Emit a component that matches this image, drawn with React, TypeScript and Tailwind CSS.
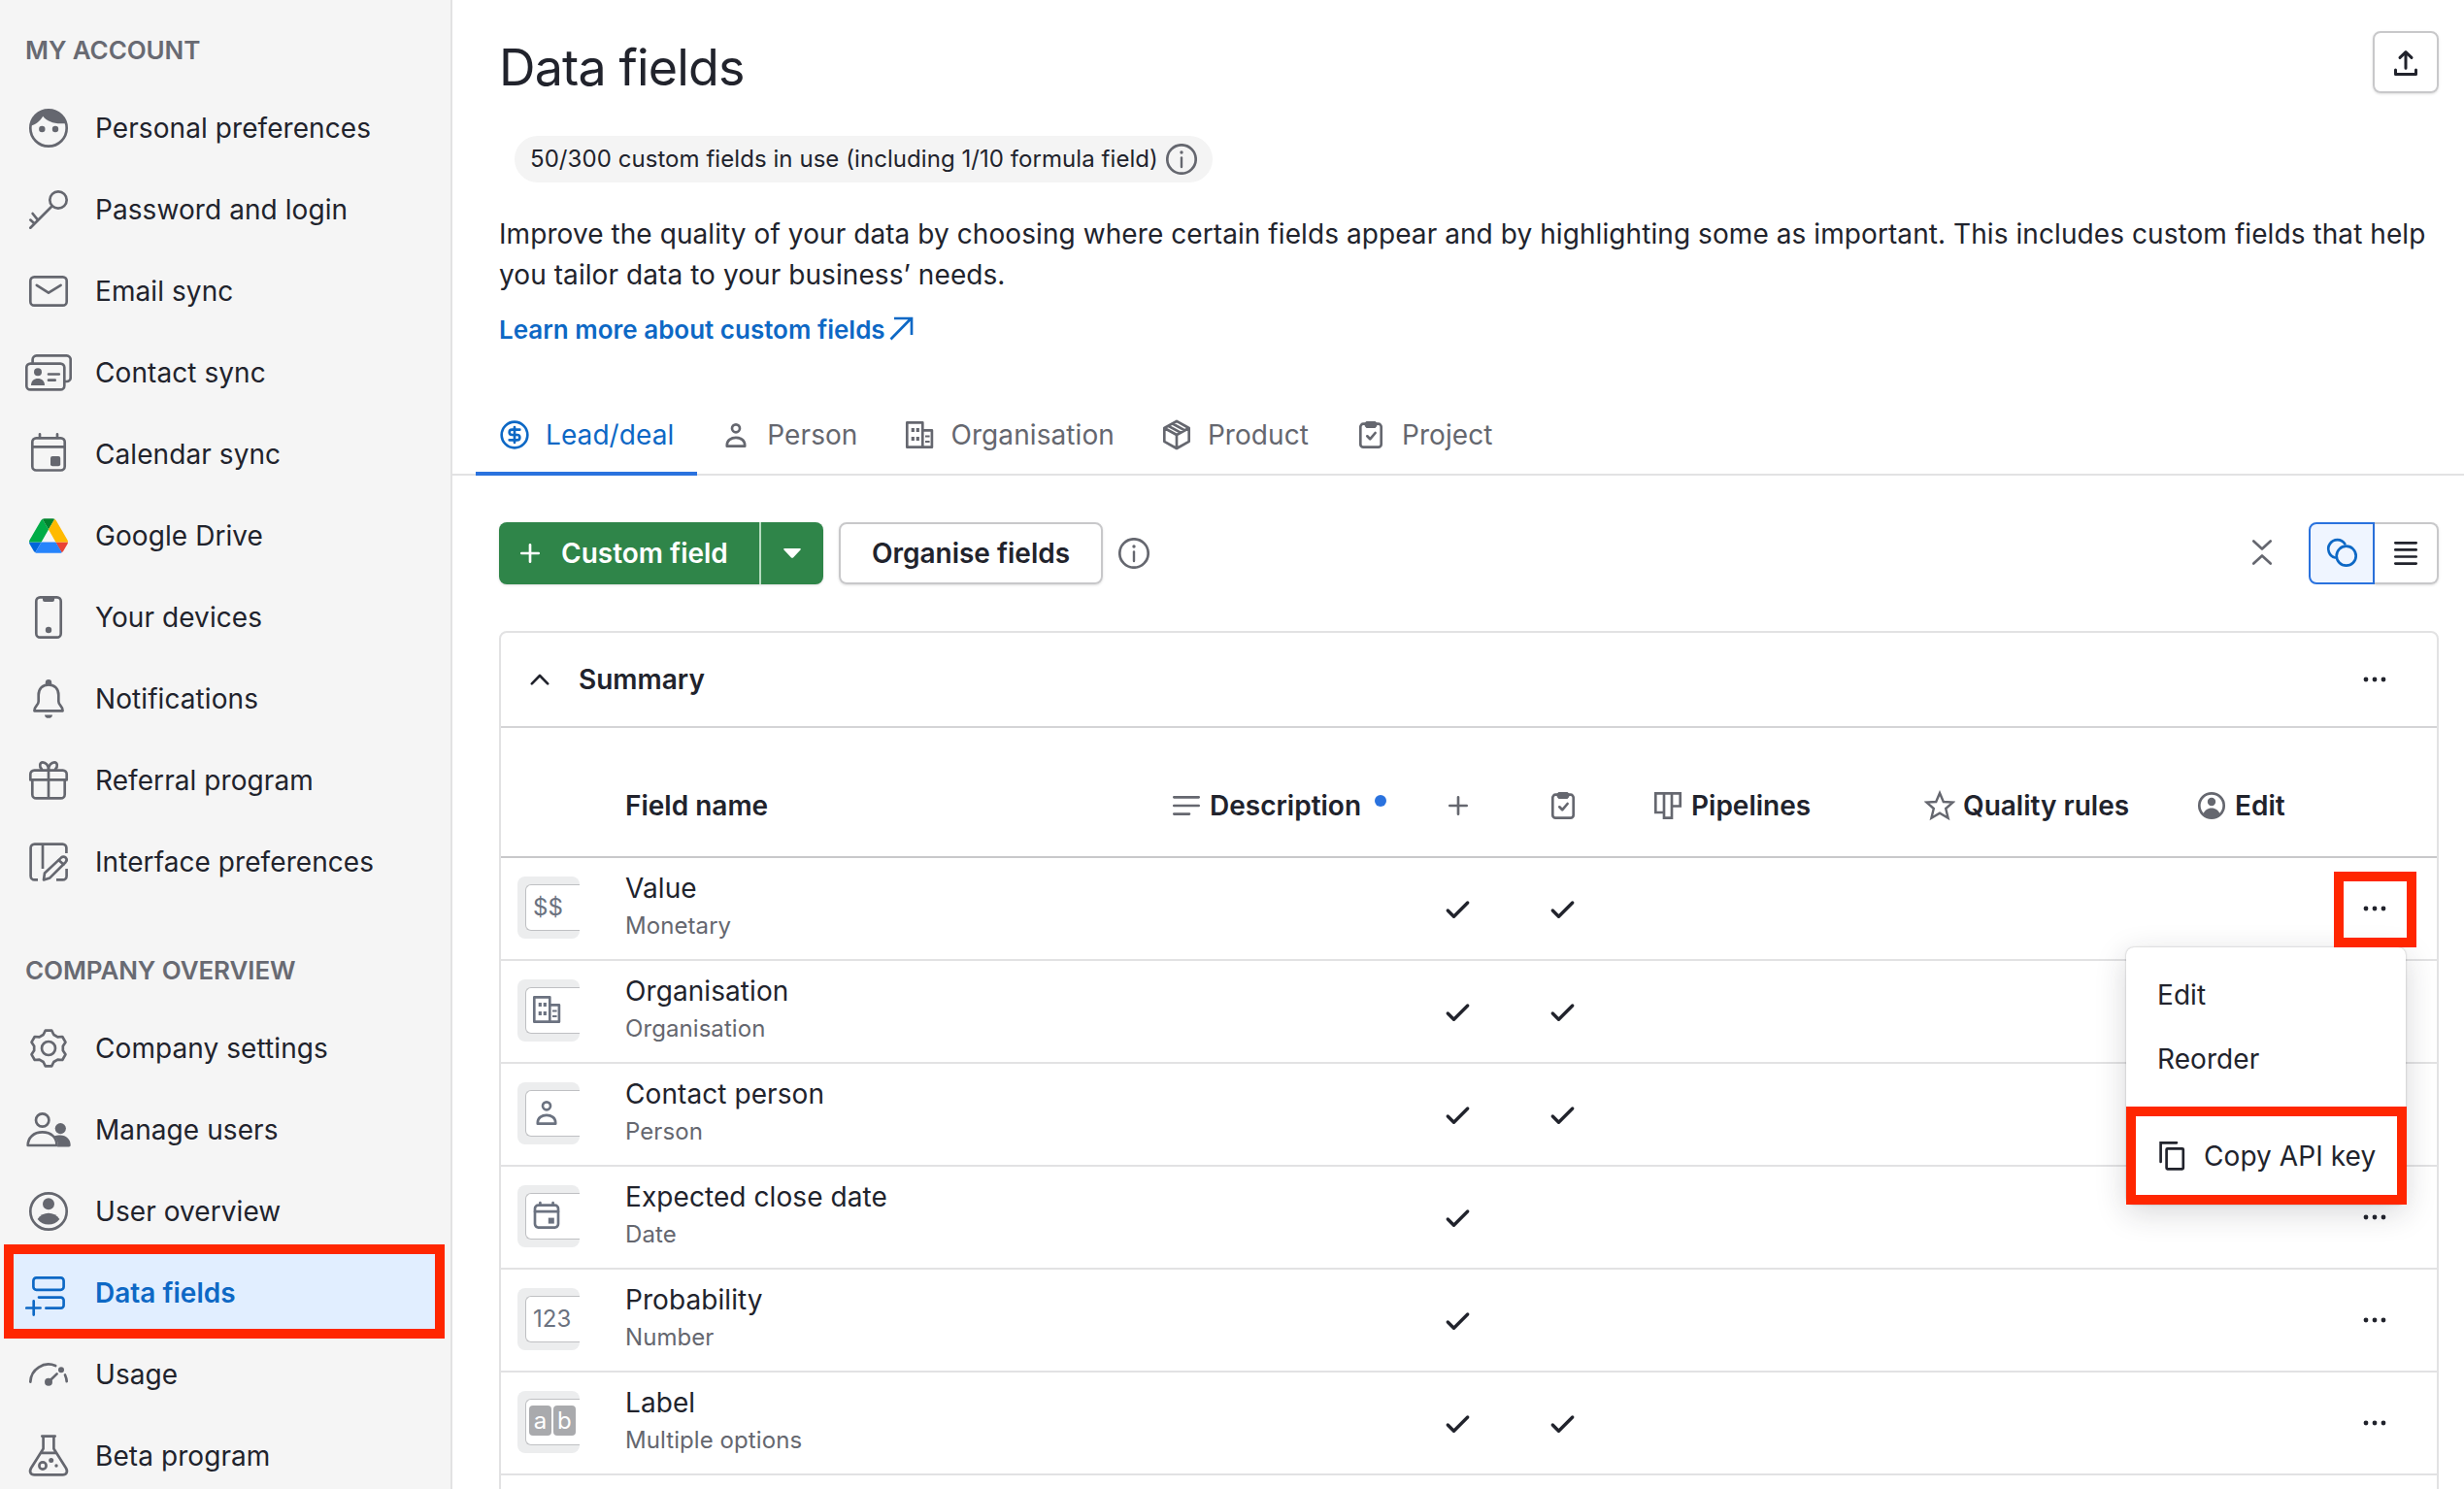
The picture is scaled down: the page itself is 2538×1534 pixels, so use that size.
import type { ReactNode, SVGProps } from 'react'
import { CircleDollarSign } from 'lucide-react'

type IconProps = SVGProps<SVGSVGElement> & { box?: number }

function Icon({ box = 48, className = '', children, ...rest }: IconProps) {
  return (
    <svg
      viewBox={`0 0 ${box} ${box}`}
      width={box}
      height={box}
      fill="none"
      stroke="currentColor"
      strokeWidth={2.67}
      strokeLinecap="round"
      strokeLinejoin="round"
      className={`shrink-0 ${className}`}
      aria-hidden="true"
      {...rest}
    >
      {children}
    </svg>
  )
}

const solid = { fill: 'currentColor', stroke: 'none' }

/* Sidebar icons */

const FaceIcon = () => (
  <Icon>
    <circle cx="24" cy="24" r="18.7" />
    <path d="M4.8 22C10.5 20.5 15.5 17 18.2 11.8C23 18 32 20.5 43 18.8A19.8 19.8 0 0 0 4.8 22Z" {...solid} />
    <circle cx="17.3" cy="25" r="3.2" {...solid} />
    <circle cx="31" cy="25" r="3.2" {...solid} />
  </Icon>
)

const KeyIcon = () => (
  <Icon>
    <circle cx="34" cy="14" r="8.7" />
    <path d="M27.7 20.3L5.3 42.7M13 34.6L7.6 28M9.4 38.2L5.3 34.6" />
  </Icon>
)

const MailIcon = () => (
  <Icon>
    <rect x="5.3" y="9.3" width="37.4" height="29.4" rx="4" />
    <path d="M11.8 17.8L24 25.6L36.6 17.8" />
  </Icon>
)

const ContactIcon = () => (
  <Icon>
    <rect x="1.3" y="14.6" width="39" height="26.8" rx="4" />
    <path d="M7.6 13.5V10.4A4 4 0 0 1 11.6 6.4H42.7A4 4 0 0 1 46.7 10.4V29A4 4 0 0 1 42.7 33H41.5" />
    <circle cx="13" cy="23.3" r="4" {...solid} />
    <path d="M6 37C6 32.5 9 30 13 30S20 32.5 20 37Z" {...solid} />
    <path d="M24 25.5H34.8M24 31.7H30.7" />
  </Icon>
)

const CalendarIcon = () => (
  <Icon>
    <rect x="7.3" y="7.3" width="33.4" height="33.2" rx="4" />
    <path d="M7.3 16.4H40.7M15 3.3V7M33 3.3V7" />
    <rect x="26" y="26" width="10.2" height="10.2" rx="2" {...solid} />
  </Icon>
)

const DriveIcon = () => (
  <svg viewBox="0 0 87.3 78" className="mx-1 h-9 w-10 shrink-0" aria-hidden="true">
    <path d="m6.6 66.85 3.85 6.65c.8 1.4 1.95 2.5 3.3 3.3l13.75-23.8h-27.5c0 1.55.4 3.1 1.2 4.5z" fill="#0066da" />
    <path d="m43.65 25-13.75-23.8c-1.35.8-2.5 1.9-3.3 3.3l-25.4 44a9.06 9.06 0 0 0-1.2 4.5h27.5z" fill="#00ac47" />
    <path d="m73.55 76.8c1.35-.8 2.5-1.9 3.3-3.3l1.6-2.75 7.65-13.25c.8-1.4 1.2-2.95 1.2-4.5h-27.5l5.85 11.5z" fill="#ea4335" />
    <path d="m43.65 25 13.75-23.8c-1.35-.8-2.9-1.2-4.5-1.2h-18.5c-1.6 0-3.15.45-4.5 1.2z" fill="#00832d" />
    <path d="m59.8 53h-32.3l-13.75 23.8c1.35.8 2.9 1.2 4.5 1.2h50.8c1.6 0 3.15-.45 4.5-1.2z" fill="#2684fc" />
    <path d="m73.4 26.5-12.7-22c-.8-1.4-1.95-2.5-3.3-3.3l-13.75 23.8 16.15 28h27.45c0-1.55-.4-3.1-1.2-4.5z" fill="#ffba00" />
  </svg>
)

const PhoneIcon = () => (
  <Icon>
    <rect x="11.3" y="3.3" width="25.4" height="41.4" rx="4" />
    <path d="M18 3.5H30V6A2 2 0 0 1 28 8H20A2 2 0 0 1 18 6Z" {...solid} />
    <circle cx="24" cy="37" r="3.2" {...solid} />
  </Icon>
)

const BellIcon = () => (
  <Icon>
    <path d="M24 9.3C17.5 9.3 13.7 14 13.7 20V26.5C13.7 31 9.4 31 9.4 36.3H38.6C38.6 31 34.3 31 34.3 26.5V20C34.3 14 30.5 9.3 24 9.3Z" />
    <circle cx="24" cy="7.2" r="3.2" {...solid} />
    <path d="M20 40.4H28C28 42.5 26.3 43.8 24 43.8S20 42.5 20 40.4Z" {...solid} />
  </Icon>
)

const GiftIcon = () => (
  <Icon>
    <path d="M5.3 23.4V17.6A4 4 0 0 1 9.3 13.6H38.7A4 4 0 0 1 42.7 17.6V23.4ZM7.3 23.4V38.4A4 4 0 0 0 11.3 42.4H36.7A4 4 0 0 0 40.7 38.4V23.4M24 12V42.4" />
    <path d="M24 12.5C24 8.5 21 5.4 18 5.4S14 9.6 17 12.5M24 12.5C24 8.5 27 5.4 30 5.4S34 9.6 31 12.5" />
  </Icon>
)

const InterfaceIcon = () => (
  <Icon>
    <path d="M13 42.4H9.6A4 4 0 0 1 5.6 38.4V9.6A4 4 0 0 1 9.6 5.6H38.4A4 4 0 0 1 42.4 9.6V15M42.6 31V38.4A4 4 0 0 1 38.6 42.4H32M18 5.6V31" strokeLinecap="butt" />
    <path d="M19 42.4L20 35.5L37 19.6C38.6 18.2 40.4 18.4 41.7 19.6C43 21 42.9 22.8 41.6 24.2L25.4 40.4Z" />
    <path d="M34.6 22.2L39.4 26.6" />
  </Icon>
)

function gearPath() {
  const pts: string[] = []
  for (let i = 0; i < 6; i++) {
    for (const [offset, r] of [[-21, 15], [-10, 18.6], [10, 18.6], [21, 15]]) {
      const a = ((i * 60 + offset - 90) * Math.PI) / 180
      pts.push(`${(24 + r * Math.cos(a)).toFixed(2)} ${(24 + r * Math.sin(a)).toFixed(2)}`)
    }
  }
  return `M${pts.join('L')}Z`
}

const GearIcon = () => (
  <Icon>
    <path d={gearPath()} />
    <circle cx="24" cy="24" r="7" />
  </Icon>
)

const UsersIcon = () => (
  <Icon>
    <circle cx="17.7" cy="14" r="6.7" />
    <path d="M2.7 40C2.7 32 8.7 26.3 17.7 26.3S32.5 32 32.5 40Z" />
    <circle cx="36.3" cy="22.6" r="5.6" {...solid} />
    <path d="M29.5 30.6C31.5 29.8 34 29.5 36 29.5C42.5 29.5 46.7 34 46.7 39.5C46.7 41 46 41.4 45 41.4H33C34.5 37.5 32.5 33 29.5 30.6Z" {...solid} />
  </Icon>
)

const UserCircleIcon = () => (
  <Icon>
    <circle cx="24" cy="24" r="18.7" />
    <circle cx="24" cy="16.2" r="6" {...solid} />
    <path d="M12.6 32C15.5 28 19.5 25.8 24 25.8S32.5 28 35.4 32C32.5 35.6 28.5 37.6 24 37.6S15.5 35.6 12.6 32Z" {...solid} />
  </Icon>
)

const DataFieldsIcon = () => (
  <Icon>
    <rect x="8.4" y="8.4" width="31.2" height="12.4" rx="3" />
    <path d="M14 28.6H36.6A3 3 0 0 1 39.6 31.6V36.7A3 3 0 0 1 36.6 39.7H21.4M1.3 39.5H15.6M8.7 32.4V46.6" />
  </Icon>
)

const UsageIcon = () => (
  <Icon>
    <path d="M5.3 31.6A18.7 18.7 0 0 1 31.2 15M41 24.5A18.7 18.7 0 0 1 42.7 31.2M24 31.7L32.6 23.4" />
    <circle cx="24" cy="31.7" r="4" {...solid} />
    <circle cx="37" cy="19.2" r="3" {...solid} />
  </Icon>
)

const FlaskIcon = () => (
  <Icon>
    <path d="M17.3 3.6H30.7M18.6 3.6V16.5L6 36.5C3.8 40.4 5.6 43.4 9.5 43.4H38.5C42.4 43.4 44.2 40.4 42 36.5L29.4 16.5V3.6M16 20.8H32" />
    <circle cx="18" cy="34" r="3.6" />
    <circle cx="26.7" cy="28.4" r="2.5" {...solid} />
    <circle cx="32" cy="34" r="1.7" {...solid} />
  </Icon>
)

/* Small icons */

const PersonIcon = () => (
  <Icon box={32}>
    <circle cx="16" cy="9.3" r="4" />
    <path d="M6.8 27.7V26.4C6.8 21.8 11 18.8 16 18.8S25.2 21.8 25.2 26.4V27.7Z" />
  </Icon>
)

const BuildingIcon = () => (
  <Icon box={32}>
    <path d="M3.3 3.3H19.3V28.7H3.3ZM19.3 11.3H28.9V28.7H19.3Z" />
    <path d="M9.3 9V13M14.3 9V13M9.3 18V22M14.3 18V22" strokeWidth={3.2} strokeLinecap="butt" />
    <path d="M22 17.6H26.6M22 23H26.6" strokeWidth={2} strokeLinecap="butt" />
  </Icon>
)

const ProductIcon = () => (
  <Icon box={32}>
    <path d="M16 1.8L28.7 9V22.8L16 30L3.3 22.8V9ZM3.3 9L16 16L28.7 9M16 16V30M7.4 6.8L20 13.7M11.8 4.5L24.4 11.4" />
  </Icon>
)

const ClipboardIcon = () => (
  <Icon box={32}>
    <rect x="5.3" y="4.7" width="21.4" height="24" rx="3" />
    <path d="M11.5 2H20.5L22.3 3.5V7L20.5 9H11.5L9.7 7V3.5Z" {...solid} />
    <path d="M12.3 17.3L15.2 20.3L20.6 14" />
  </Icon>
)

const InfoIcon = () => (
  <Icon box={32} className="text-[#65676f]">
    <circle cx="16" cy="16" r="14.7" />
    <path d="M16 14.4V24" strokeWidth={2.4} />
    <circle cx="16" cy="9" r="1.7" {...solid} />
  </Icon>
)

const PlusIcon = () => (
  <Icon box={32}>
    <path d="M7.3 16H24.7M16 7.3V24.7" />
  </Icon>
)

const CheckIcon = () => (
  <Icon box={32} strokeWidth={3.4}>
    <path d="M5.3 18L11.5 24.2L25.7 10" />
  </Icon>
)

const DotsIcon = () => (
  <Icon box={32} className="text-[#21232c]">
    <circle cx="7" cy="16" r="2.4" {...solid} />
    <circle cx="16" cy="16" r="2.4" {...solid} />
    <circle cx="25" cy="16" r="2.4" {...solid} />
  </Icon>
)

const accountItems = [
  { label: 'Personal preferences', icon: <FaceIcon /> },
  { label: 'Password and login', icon: <KeyIcon /> },
  { label: 'Email sync', icon: <MailIcon /> },
  { label: 'Contact sync', icon: <ContactIcon /> },
  { label: 'Calendar sync', icon: <CalendarIcon /> },
  { label: 'Google Drive', icon: <DriveIcon /> },
  { label: 'Your devices', icon: <PhoneIcon /> },
  { label: 'Notifications', icon: <BellIcon /> },
  { label: 'Referral program', icon: <GiftIcon /> },
  { label: 'Interface preferences', icon: <InterfaceIcon /> },
]

const companyItems = [
  { label: 'Company settings', icon: <GearIcon /> },
  { label: 'Manage users', icon: <UsersIcon /> },
  { label: 'User overview', icon: <UserCircleIcon /> },
  { label: 'Data fields', icon: <DataFieldsIcon />, active: true },
  { label: 'Usage', icon: <UsageIcon /> },
  { label: 'Beta program', icon: <FlaskIcon /> },
]

function NavItem({ label, icon, active }: { label: string; icon: ReactNode; active?: boolean }) {
  return (
    <li
      className={`relative flex h-[84px] items-center gap-6 pl-[26px] ${
        active ? 'font-semibold tracking-normal text-[#0d68c5]' : 'text-[#21232c]'
      }`}
    >
      {active && (
        <div className="absolute -top-2 left-1 h-[97px] w-[454px] border-[10px] border-[#ff2600] bg-[#e1eeff]" />
      )}
      <span className={`relative ${active ? '' : 'text-[#65676f]'}`}>{icon}</span>
      <span className="relative">{label}</span>
    </li>
  )
}

function Sidebar() {
  return (
    <nav className="w-[466px] shrink-0 border-r-2 border-[#e2e2e3] bg-[#f5f5f5]">
      <h2 className="flex h-[90px] items-center pt-3 pl-[26px] text-[26px] font-semibold tracking-[-0.1px] text-[#686a72]">
        MY ACCOUNT
      </h2>
      <ul>
        {accountItems.map(item => <NavItem key={item.label} {...item} />)}
      </ul>
      <h2 className="flex h-[108px] items-center pt-[30px] pl-[26px] text-[26px] font-semibold tracking-[-0.1px] text-[#686a72]">
        COMPANY OVERVIEW
      </h2>
      <ul>
        {companyItems.map(item => <NavItem key={item.label} {...item} />)}
      </ul>
    </nav>
  )
}

const tabs = [
  { label: 'Lead/deal', icon: <CircleDollarSign size={32} strokeWidth={2} />, active: true },
  { label: 'Person', icon: <PersonIcon /> },
  { label: 'Organisation', icon: <BuildingIcon /> },
  { label: 'Product', icon: <ProductIcon /> },
  { label: 'Project', icon: <ClipboardIcon /> },
]

function Tabs() {
  return (
    <div className="flex h-[84px] shrink-0 border-b-2 border-[#e2e2e3] pl-6">
      {tabs.map(tab => (
        <div
          key={tab.label}
          className={`-mb-0.5 flex items-center gap-4 border-b-4 px-6 pt-1 ${
            tab.active ? 'border-[#2a72de] text-[#0d68c5]' : 'border-transparent text-[#65676f]'
          }`}
        >
          {tab.icon}
          <span>{tab.label}</span>
        </div>
      ))}
    </div>
  )
}

function Toolbar() {
  return (
    <div className="mt-12 flex h-16 shrink-0 items-center pr-[26px] pl-12">
      <div className="flex h-16 w-[334px] overflow-hidden rounded-lg bg-[#2f8549] font-semibold tracking-normal text-white shadow-sm">
        <button className="flex w-[270px] items-center gap-4 border-r-2 border-[#b5dbbf] pl-4">
          <PlusIcon />
          Custom field
        </button>
        <button className="flex flex-1 items-center justify-center" aria-label="More field types">
          <svg width="18" height="10" viewBox="0 0 18 10" aria-hidden="true">
            <path d="M1 0H17C18 0 18 1 17.5 1.5L10 9.4C9.5 10 8.5 10 8 9.4L0.5 1.5C0 1 0 0 1 0Z" fill="white" />
          </svg>
        </button>
      </div>
      <button className="mr-4 ml-4 h-16 w-[272px] rounded-lg border-2 border-[#c8c8ca] font-semibold tracking-normal shadow-sm">
        Organise fields
      </button>
      <InfoIcon />
      <div className="ml-auto flex items-center">
        <Icon box={32} className="mr-8 mb-0.5 text-[#65676f]">
          <path d="M7.3 4.5L16 12.6L24.7 4.5M7.3 27.5L16 19.4L24.7 27.5" />
        </Icon>
        <button className="flex h-16 w-[68px] items-center justify-center rounded-l-lg border-2 border-[#2a72de] bg-[#eff5ff] text-[#0d68c5]">
          <Icon box={36}>
            <path d="M11.3 22.5A9.3 9.3 0 1 1 21.3 8.3" />
            <circle cx="22.7" cy="20.7" r="10" />
          </Icon>
        </button>
        <button className="flex h-16 w-[66px] items-center justify-center rounded-r-lg border-2 border-l-0 border-[#c8c8ca] shadow-sm">
          <Icon box={32}>
            <path d="M5.3 5.3H26.7M5.3 12.4H26.7M5.3 19.5H26.7M5.3 26.6H26.7" />
          </Icon>
        </button>
      </div>
    </div>
  )
}

const gridCols =
  'grid grid-cols-[128px_564px_240px_108px_108px_318px_282px_128px_108px] items-center'

interface Field {
  name: string
  type: string
  glyph: ReactNode
  inDetail?: boolean
  menu?: boolean
}

const fields: Field[] = [
  { name: 'Value', type: 'Monetary', glyph: <span className="pl-[7px]">$$</span>, inDetail: true, menu: true },
  { name: 'Organisation', type: 'Organisation', glyph: <span className="mb-0.5 pl-[5px]"><BuildingIcon /></span>, inDetail: true },
  { name: 'Contact person', type: 'Person', glyph: <span className="mb-0.5 pl-[5px]"><PersonIcon /></span>, inDetail: true },
  {
    name: 'Expected close date',
    type: 'Date',
    glyph: (
      <Icon box={32} className="mb-0.5 ml-[5px]">
        <rect x="4" y="5.6" width="24" height="23" rx="3.5" />
        <path d="M4 12.2H28M9.4 3V5M22.6 3V5" />
        <rect x="17.8" y="18.6" width="6" height="6" {...solid} />
      </Icon>
    ),
  },
  { name: 'Probability', type: 'Number', glyph: <span className="pl-[7px]">123</span> },
  {
    name: 'Label',
    type: 'Multiple options',
    glyph: (
      <span className="mb-[3px] flex gap-0.5 pl-[3px] text-white">
        <span className="flex h-[31px] w-[23px] items-center justify-center rounded bg-[#a9aaad]">a</span>
        <span className="flex h-[31px] w-[23px] items-center justify-center rounded bg-[#a9aaad]">b</span>
      </span>
    ),
    inDetail: true,
  },
]

function FieldTile({ children }: { children: ReactNode }) {
  return (
    <div className="mb-0.5 ml-[17px] flex h-16 w-16 items-center justify-end overflow-hidden rounded-lg bg-[#ecedee]">
      <div className="flex h-12 w-[56px] items-center rounded-l-md border border-r-0 border-[#bfc0c3] bg-white text-[24px] text-[#6b7280]">
        {children}
      </div>
    </div>
  )
}

function RowMenu() {
  return (
    <>
      <div className="absolute top-[92px] right-[32px] z-10 h-[265px] w-[288px] rounded-lg bg-white shadow-[0_0_2px_rgba(33,35,44,0.35),0_8px_32px_rgba(33,35,44,0.18)]">
        <div className="flex flex-col pt-4 pl-8">
          <div className="flex h-[66px] items-center">Edit</div>
          <div className="flex h-[66px] items-center">Reorder</div>
        </div>
        <div className="mt-4 flex h-[101px] w-[289px] items-center gap-4 border-[10px] border-[#ff2600] pl-[22px]">
          <Icon box={32} className="-mt-0.5" strokeLinejoin="miter">
            <path d="M3.6 23V3.3H20" />
            <rect x="9.6" y="9.3" width="17.2" height="21" rx="1" />
          </Icon>
          <span className="whitespace-nowrap">Copy API key</span>
        </div>
      </div>
      <div className="absolute top-[14px] right-[21px] z-20 h-[78px] w-[85px] border-[10px] border-[#ff2600]" />
    </>
  )
}

function FieldRow({ field }: { field: Field }) {
  return (
    <div className={`relative h-[106px] border-b-2 border-[#e2e2e3] ${gridCols}`}>
      <FieldTile>{field.glyph}</FieldTile>
      <div className="mb-[5px] flex flex-col">
        <span className="leading-[40px]">{field.name}</span>
        <span className="text-[24px] leading-[38px] text-[#65676f]">{field.type}</span>
      </div>
      <span />
      <span className="flex justify-center"><CheckIcon /></span>
      <span className="flex justify-center">{field.inDetail && <CheckIcon />}</span>
      <span />
      <span />
      <span />
      <span className="flex justify-center"><DotsIcon /></span>
      {field.menu && <RowMenu />}
    </div>
  )
}

function FieldTable() {
  return (
    <section className="mt-12 mr-[26px] ml-12 h-[980px] shrink-0 rounded-lg border-2 border-[#e2e2e3]">
      <div className="flex h-[98px] items-center border-b-2 border-[#d4d4d6] pr-[48px] pl-6 font-semibold tracking-normal">
        <Icon box={32}>
          <path d="M7.8 20.4L16 12L24.2 20.4" />
        </Icon>
        <h3 className="ml-6 flex-1">Summary</h3>
        <DotsIcon />
      </div>
      <div className={`h-[134px] border-b-2 border-[#c8c8ca] pt-[28px] font-semibold tracking-normal ${gridCols}`}>
        <span />
        <span>Field name</span>
        <span className="-ml-0.5 flex items-center gap-2">
          <Icon box={32} className="text-[#65676f]">
            <path d="M3.3 7.3H28.7M3.3 16H28.7M3.3 24.6H19" />
          </Icon>
          Description
          <i className="mb-2.5 ml-1.5 h-3 w-3 rounded-full bg-[#2a72de]" />
        </span>
        <span className="flex justify-center text-[#65676f]"><PlusIcon /></span>
        <span className="flex justify-center text-[#65676f]"><ClipboardIcon /></span>
        <span className="flex items-center gap-2 pl-[38px]">
          <Icon box={32} className="text-[#65676f]">
            <path d="M3.3 3.3H28.7V16.5H20V28.7H12V23H3.3ZM12 3.3V23M20 3.3V16.5" strokeLinejoin="miter" />
          </Icon>
          Pipelines
        </span>
        <span className="flex items-center gap-2">
          <Icon box={32} className="text-[#65676f]" strokeLinejoin="miter" strokeWidth={2.4}>
            <path d="M16 3L19.8 12L29.5 12.6L22.2 19L24.6 28.8L16 23.6L7.4 28.8L9.8 19L2.5 12.6L12.2 12Z" />
          </Icon>
          Quality rules
        </span>
        <span className="-ml-0.5 flex items-center gap-2">
          <Icon box={32} className="text-[#65676f]">
            <circle cx="16" cy="16" r="12.7" />
            <circle cx="16" cy="12" r="4.2" {...solid} />
            <path d="M7 25.5C8.5 21 12 18.6 16 18.6S23.5 21 25 25.5C20 30 12 30 7 25.5Z" {...solid} />
          </Icon>
          Edit
        </span>
      </div>
      {fields.map(field => <FieldRow key={field.name} field={field} />)}
    </section>
  )
}

function Header() {
  return (
    <header className="flex h-[406px] shrink-0 flex-col pr-[26px] pl-12">
      <div className="flex h-[140px] items-start justify-between">
        <h1 className="mt-[38px] text-[52px] leading-[64px] tracking-[-0.85px]">Data fields</h1>
        <button className="mt-8 flex h-16 w-[68px] items-center justify-center rounded-lg border-2 border-[#c8c8ca] shadow-sm">
          <Icon box={32} strokeWidth={3}>
            <path d="M16 22.3V6M10 11.4L16 5.6L22 11.4M5.5 24V28.5H26.5V24" />
          </Icon>
        </button>
      </div>
      <div className="ml-4 flex h-12 items-center gap-2 self-start rounded-full bg-[#f4f4f4] px-4 text-[24px] tracking-[0.06px]">
        50/300 custom fields in use (including 1/10 formula field)
        <InfoIcon />
      </div>
      <p className="mt-8 leading-[42px]">
        Improve the quality of your data by choosing where certain fields appear and by highlighting some as
        important. This includes custom fields that help
        <br />
        you tailor data to your business’ needs.
      </p>
      <a className="mt-[15px] flex h-10 items-center text-[26px] font-semibold tracking-normal text-[#0d68c5]">
        Learn more about custom fields
        <Icon box={32}>
          <path d="M5.5 26.5L26 5.5M9 5H27V22" strokeLinecap="butt" strokeLinejoin="miter" />
        </Icon>
      </a>
    </header>
  )
}

export default function App() {
  return (
    <div className="flex h-[1534px] w-[2538px] overflow-hidden bg-white font-['Inter',sans-serif] text-[28px] tracking-[0.075px] text-[#21232c]">
      <Sidebar />
      <main className="flex min-w-0 flex-1 flex-col">
        <Header />
        <Tabs />
        <Toolbar />
        <FieldTable />
      </main>
    </div>
  )
}
